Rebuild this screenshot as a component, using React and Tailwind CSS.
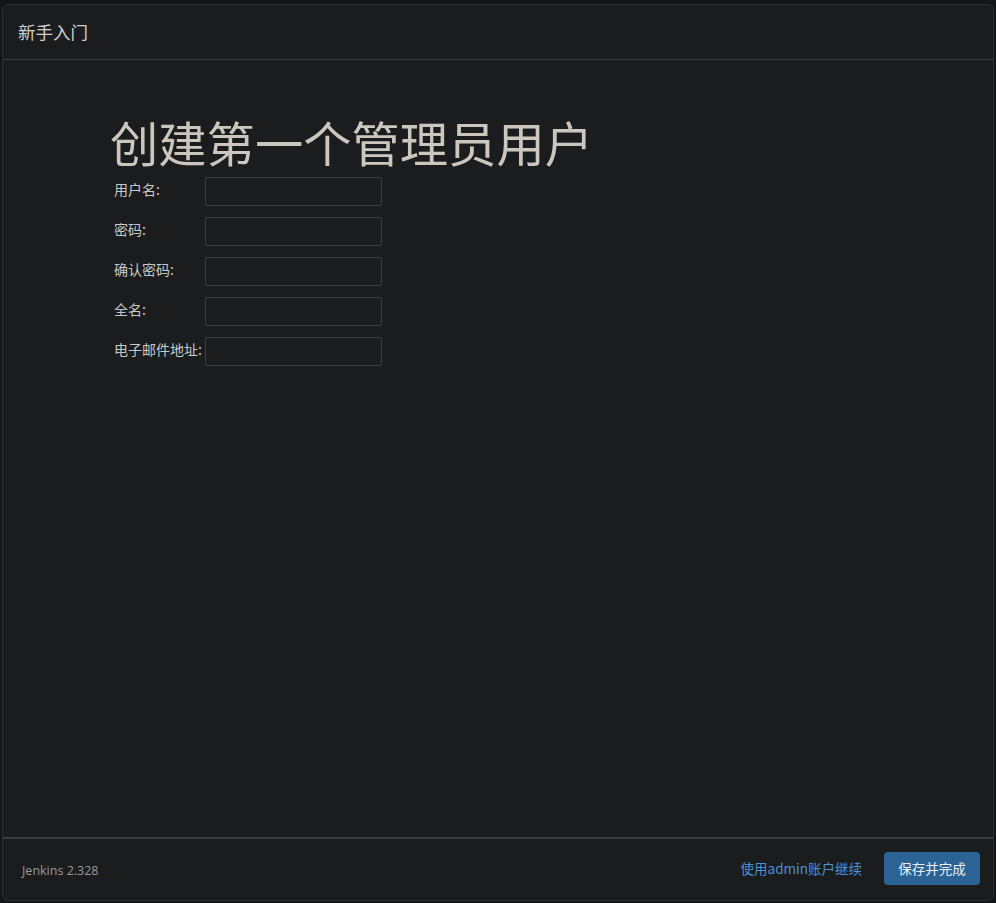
export default function App() {
  const font = { fontFamily: '"Noto Sans CJK SC", "Noto Sans", sans-serif' };
  const rows = ["用户名:", "密码:", "确认密码:", "全名:", "电子邮件地址:"];
  return (
    <div className="min-h-screen bg-[#141516] pt-[4px] pl-[2px] pr-[2px] pb-[2px]" style={font}>
      <div className="w-[992px] h-[897px] flex flex-col bg-[#1b1c1e] border border-[#2c2d2f] rounded-[6px]">
        <div className="h-[55px] flex items-center pl-[15px] border-b border-[#3a3b3d] text-[17.5px] text-[#cfd0d0]">
          新手入门
        </div>
        <div className="flex-1 pl-[107px] pt-[52px]">
          <h1 className="text-[48.3px] leading-[58px] text-[#cbc7bf] font-normal">创建第一个管理员用户</h1>
          <div className="flex flex-col gap-[11px] mt-[7px] pl-[4px]">
            {rows.map((r) => (
              <div key={r} className="flex items-center">
                <div className="w-[91px] text-[14px] text-[#c9c9c9] leading-none -mt-[5px] whitespace-nowrap">{r}</div>
                <input className="w-[177px] h-[29px] bg-[#1b1c1e] border border-[#3c3d3f] rounded-[2px] outline-none" />
              </div>
            ))}
          </div>
        </div>
        <div className="h-[63px] border-t-2 border-[#3a3d3e] flex items-center pl-[19px] pr-[13px]">
          <div className="text-[12.5px] text-[#9a9a9a] mt-[3px]" style={{ fontFamily: '"Open Sans", "Noto Sans", sans-serif' }}>Jenkins 2.328</div>
          <div className="flex-1" />
          <a className="text-[13.5px] text-[#4a92d4] mr-[22px] -mt-[3px]">使用admin账户继续</a>
          <button className="w-[96px] h-[33px] bg-[#2a6394] rounded-[4px] text-[13.5px] text-[#e8eef4] -mt-[3px]">保存并完成</button>
        </div>
      </div>
    </div>
  );
}
